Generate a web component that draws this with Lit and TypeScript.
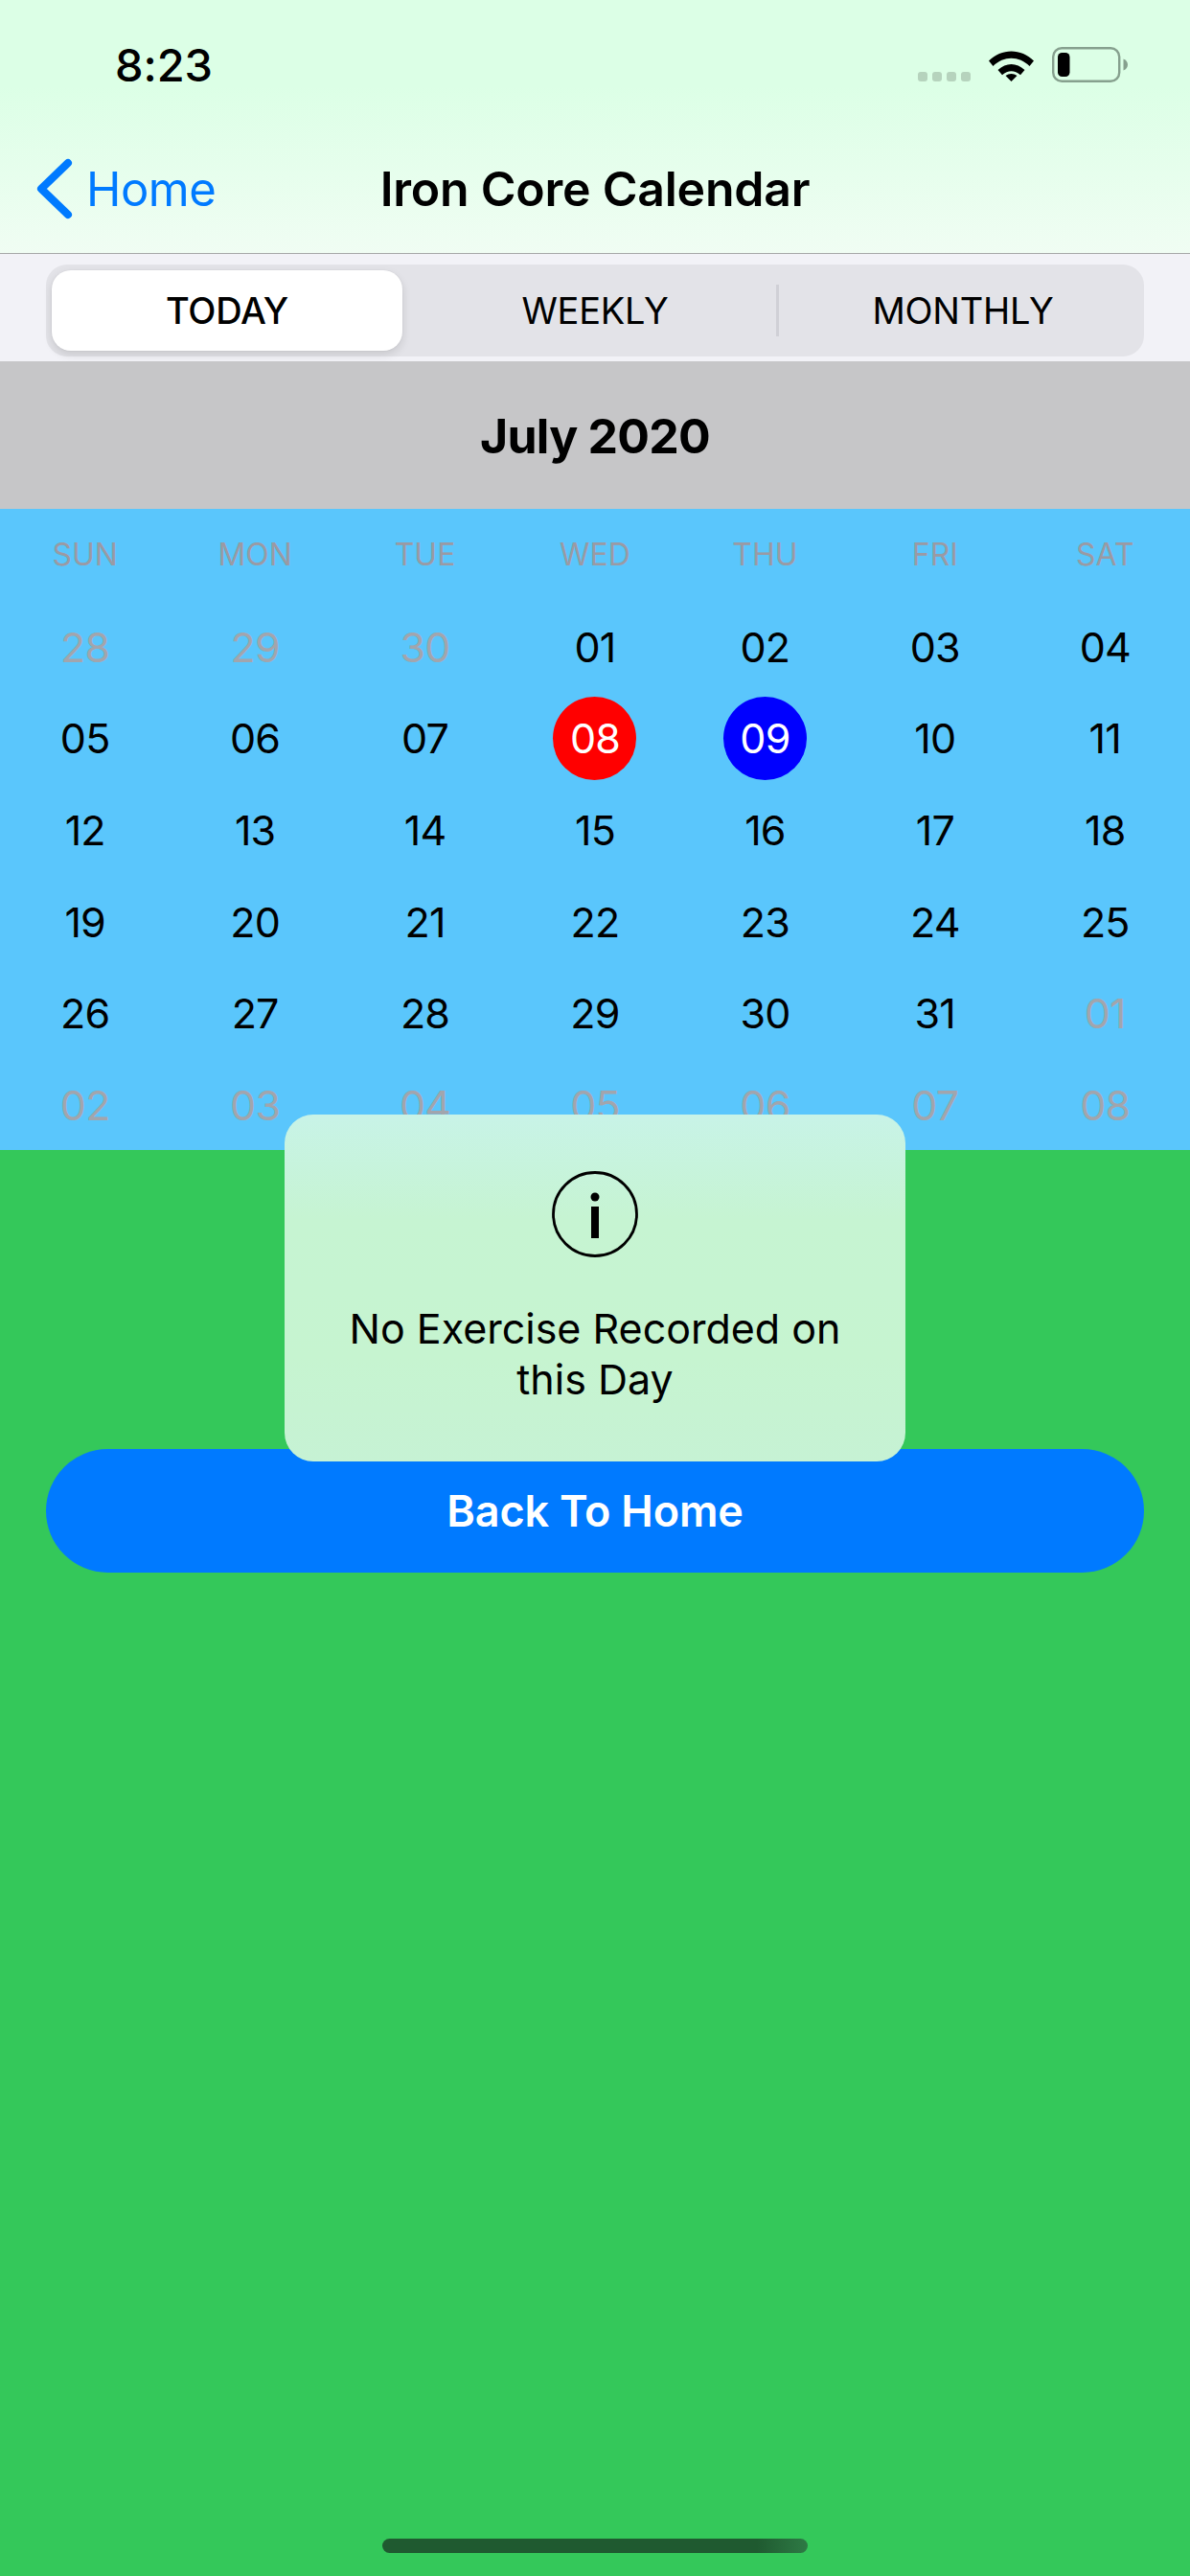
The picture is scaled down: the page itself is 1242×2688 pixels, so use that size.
import { LitElement, html, css } from "lit";
import { customElement } from "lit/decorators.js";

type Day = { t: string; k?: string };
const muted = (t: string): Day => ({ t, k: "muted" });
const pad = (n: number) => String(n).padStart(2, "0");

const days: Day[] = [
  muted("28"), muted("29"), muted("30"),
  ...Array.from({ length: 31 }, (_, i): Day => ({
    t: pad(i + 1),
    k: i === 7 ? "today" : i === 8 ? "picked" : "",
  })),
  ...["01", "02", "03", "04", "05", "06", "07", "08"].map(muted),
];

@customElement("app-root")
export class AppRoot extends LitElement {
  static styles = css`
    :host {
      display: block;
      width: 1242px;
      height: 2688px;
      font-family: Inter, "Liberation Sans", sans-serif;
      color: #000;
    }
    .page {
      position: relative;
      width: 1242px;
      height: 2688px;
      display: flex;
      flex-direction: column;
      overflow: hidden;
      background: #34c85a;
    }
    .top {
      height: 264px;
      flex: none;
      background: linear-gradient(180deg, #dcffe6 0, #dcffe6 90px, #f0fdf3 264px);
      display: flex;
      flex-direction: column;
    }
    .status {
      height: 132px;
      display: flex;
      align-items: flex-start;
      padding: 49px 65px 0 120px;
      box-sizing: border-box;
    }
    .time {
      font-size: 47px;
      line-height: 38px;
      font-weight: 550;
      letter-spacing: -0.1px;
      flex: 1;
    }
    .sicons {
      display: flex;
      align-items: flex-start;
    }
    .dots {
      display: flex;
      gap: 5px;
      margin: 26px 19px 0 0;
    }
    .dots i {
      width: 10px;
      height: 10px;
      border-radius: 3px;
      background: #b6d3bd;
    }
    .wifi {
      width: 47px;
      height: 36px;
      margin-right: 19px;
    }
    .battery {
      width: 79px;
      height: 37px;
    }
    .nav {
      flex: 1;
      display: grid;
      grid-template-columns: 1fr auto 1fr;
      align-items: center;
      padding-bottom: 2px;
    }
    .back {
      display: flex;
      align-items: center;
      color: #007aff;
      font-size: 49px;
      letter-spacing: -0.5px;
      padding-left: 38px;
      gap: 14px;
    }
    .title {
      font-size: 50px;
      font-weight: 600;
      letter-spacing: -0.25px;
    }
    .segbar {
      height: 113px;
      flex: none;
      box-sizing: border-box;
      border-top: 1px solid #a6a8a8;
      background: #f2f2f7;
      padding: 11px 48px 6px;
    }
    .seg {
      height: 96px;
      border-radius: 22px;
      background: #e3e3e8;
      padding: 6px 0 6px 6px;
      box-sizing: border-box;
      display: grid;
      grid-template-columns: 378px 378px 1fr;
      font-size: 38px;
      letter-spacing: -0.25px;
      text-align: center;
      line-height: 84px;
    }
    .tile {
      width: 366px;
      height: 84px;
      border-radius: 20px;
      background: #fff;
      font-weight: 500;
      box-shadow: 0 4px 10px rgba(0, 0, 0, 0.12), 0 0 0 1px rgba(0, 0, 0, 0.02);
    }
    .cell {
      position: relative;
    }
    .cell.split {
      padding-left: 6px;
    }
    .cell.split::before {
      content: "";
      position: absolute;
      left: 0;
      top: 15px;
      height: 54px;
      width: 3px;
      background: #d0d0d6;
    }
    .month {
      height: 154px;
      flex: none;
      background: #c6c6c8;
      box-sizing: border-box;
      padding-top: 2px;
      display: flex;
      align-items: center;
      justify-content: center;
      font-size: 50px;
      font-weight: 700;
      letter-spacing: -0.75px;
    }
    .cal {
      height: 669px;
      flex: none;
      background: #5ac6fc;
      box-sizing: border-box;
      padding-top: 18px;
    }
    .week,
    .grid {
      display: grid;
      grid-template-columns: repeat(7, 1fr);
      text-align: center;
    }
    .week {
      height: 58px;
      align-items: center;
      font-size: 32px;
      color: #9a9aa4;
      letter-spacing: 0;
    }
    .grid {
      grid-auto-rows: 95.6px;
      margin-top: 20px;
      font-size: 43px;
      letter-spacing: -0.8px;
      justify-items: center;
      align-items: center;
    }
    .d {
      width: 87px;
      height: 87px;
      border-radius: 50%;
      display: flex;
      align-items: center;
      justify-content: center;
    }
    .d.muted {
      color: #a2a5ad;
    }
    .d.today {
      background: #ff0000;
      color: #fff;
    }
    .d.picked {
      background: #0000ff;
      color: #fff;
    }
    .main {
      flex: 1;
      padding: 312px 48px 0;
    }
    .home-btn {
      height: 129px;
      border-radius: 65px;
      background: #007aff;
      color: #fff;
      display: flex;
      align-items: center;
      justify-content: center;
      font-size: 45px;
      font-weight: 600;
      letter-spacing: -0.2px;
    }
    .toast {
      position: absolute;
      left: 297px;
      top: 1163px;
      width: 648px;
      height: 362px;
      border-radius: 30px;
      background: linear-gradient(180deg, #c8f3e7 0, #c6f4d2 30%, #c6f4d0 70%, #c6f2d4 100%);
      display: flex;
      flex-direction: column;
      align-items: center;
      box-sizing: border-box;
      padding-top: 59px;
      text-align: center;
    }
    .info {
      width: 90px;
      height: 90px;
      flex: none;
    }
    .msg {
      margin-top: 48px;
      font-size: 43px;
      line-height: 53px;
      letter-spacing: 0;
      width: 560px;
    }
    .indicator {
      position: absolute;
      left: 399px;
      top: 2649px;
      width: 444px;
      height: 15px;
      border-radius: 8px;
      background: linear-gradient(90deg, #1f5a30 0, #1f5a30 88%, #2e7a45 100%);
    }
  `;

  render() {
    return html`
      <div class="page">
        <header class="top">
          <div class="status">
            <div class="time">8:23</div>
            <div class="sicons">
              <div class="dots"><i></i><i></i><i></i><i></i></div>
              <svg class="wifi" viewBox="0 0 47 36">
                <path d="M0 14.5 C13 1 34 1 47 14.5 L42.5 20 C31.5 9 15.5 9 4.5 20 Z" fill="#000" />
                <path d="M9.5 24 C18 16 29 16 37.5 24 L33 29.2 C27 24 20 24 14 29.2 Z" fill="#000" />
                <path d="M17.5 30 C21 27.2 26 27.2 29.5 30 L23.5 36 Z" fill="#000" />
              </svg>
              <svg class="battery" viewBox="0 0 79 37">
                <rect x="1.2" y="1.2" width="69" height="34.6" rx="9" fill="none" stroke="#86a08e" stroke-width="2.4" />
                <rect x="6" y="6" width="12.5" height="25" rx="4.5" fill="#000" />
                <path d="M74.500 12.500 C77.500 13.500 79 16 79 18.500 C79 21 77.500 23.500 74.500 24.500 Z" fill="#86a08e" />
              </svg>
            </div>
          </div>
          <nav class="nav">
            <div class="back">
              <svg width="38" height="64" viewBox="0 0 38 64">
                <path d="M33 5 L5 32 L33 59" fill="none" stroke="#007aff" stroke-width="8" stroke-linecap="round" stroke-linejoin="round" />
              </svg>
              <span>Home</span>
            </div>
            <div class="title">Iron Core Calendar</div>
            <div></div>
          </nav>
        </header>
        <div class="segbar">
          <div class="seg">
            <div class="cell"><div class="tile">TODAY</div></div>
            <div class="cell">WEEKLY</div>
            <div class="cell split">MONTHLY</div>
          </div>
        </div>
        <div class="month">July 2020</div>
        <section class="cal">
          <div class="week">
            ${["SUN", "MON", "TUE", "WED", "THU", "FRI", "SAT"].map((d) => html`<div>${d}</div>`)}
          </div>
          <div class="grid">
            ${days.map((d) => html`<div class="d ${d.k ?? ""}">${d.t}</div>`)}
          </div>
        </section>
        <main class="main">
          <div class="home-btn">Back To Home</div>
        </main>
        <div class="toast">
          <svg class="info" viewBox="0 0 90 90">
            <circle cx="45" cy="45" r="43.500" fill="none" stroke="#000" stroke-width="2.800" />
            <circle cx="45" cy="27" r="4.500" fill="#000" />
            <rect x="41" y="37" width="8" height="33" fill="#000" />
          </svg>
          <div class="msg">No Exercise Recorded on this Day</div>
        </div>
        <div class="indicator"></div>
      </div>
    `;
  }
}
